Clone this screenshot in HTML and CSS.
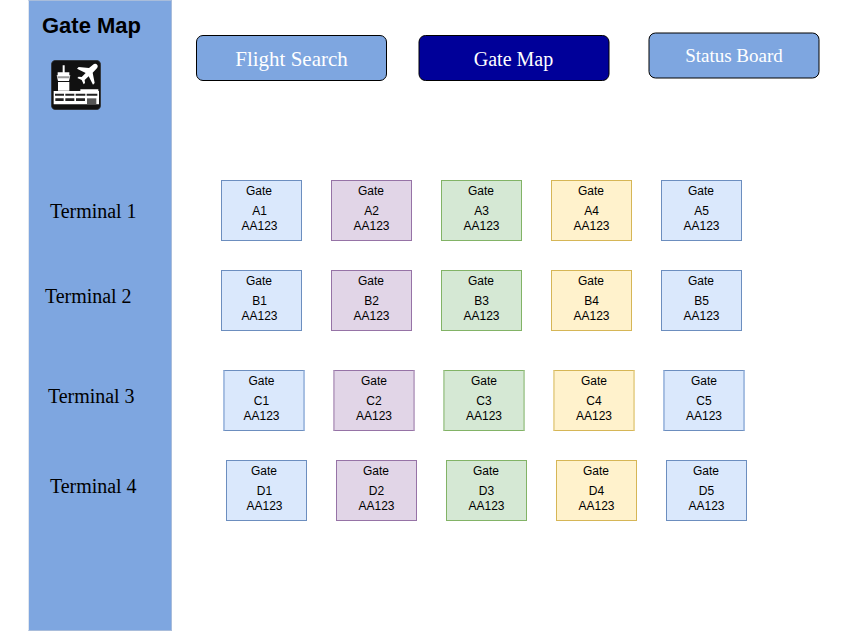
FILE: index.html
```html
<!DOCTYPE html>
<html lang="en">
<head>
<meta charset="utf-8">
<title>Gate Map</title>
<link rel="stylesheet" href="styles.css">
</head>
<body>
<aside class="sidebar">
  <h1 class="title">Gate Map</h1>
  <svg class="logo" viewBox="18 15 150 150" aria-hidden="true">
    <rect x="19" y="16" width="148" height="148" rx="13" fill="#111" stroke="#333" stroke-width="2"/>
    <path fill="#fff" d="M53 31h6v21h14v9H38v-9h15zM35 61h41l-4 17H39zM39 81h34v26H39z"/>
    <path fill="#999" d="M37 64h37l-1 6H38z"/>
    <path fill="#fff" d="M26 108h80v-5h54v5h2v40H26z"/>
    <path fill="#222" d="M30 116h27v6H30zM61 116h27v6H61zM92 116h29v6H92zM125 116h32v6h-32zM31 130h25v8H31zM61 130h27v8H61zM93 130h27v8H93z"/>
    <path fill="#555" d="M126 130h28v17h-28z"/>
    <path fill="#fff" d="M157 30c3 4 0 9-4 13l-10 10 6 31-5 5-13-25-12 11 1 9-4 4-6-13-13-6 4-4 9 1 12-12-26-13 5-5 31 3 11-9c5-4 10-5 14 0z"/>
  </svg>
  <div class="terminal t1">Terminal 1</div>
  <div class="terminal t2">Terminal 2</div>
  <div class="terminal t3">Terminal 3</div>
  <div class="terminal t4">Terminal 4</div>
</aside>
<main class="content">
  <nav class="nav">
    <a class="tab search">Flight Search</a>
    <a class="tab current">Gate Map</a>
    <a class="tab status">Status Board</a>
  </nav>
  <section class="row row-a">
    <div class="gate blue first"><p>Gate</p><p>A1<br>AA123</p></div>
    <div class="gate purple"><p>Gate</p><p>A2<br>AA123</p></div>
    <div class="gate green"><p>Gate</p><p>A3<br>AA123</p></div>
    <div class="gate yellow"><p>Gate</p><p>A4<br>AA123</p></div>
    <div class="gate blue"><p>Gate</p><p>A5<br>AA123</p></div>
  </section>
  <section class="row row-b">
    <div class="gate blue first"><p>Gate</p><p>B1<br>AA123</p></div>
    <div class="gate purple"><p>Gate</p><p>B2<br>AA123</p></div>
    <div class="gate green"><p>Gate</p><p>B3<br>AA123</p></div>
    <div class="gate yellow"><p>Gate</p><p>B4<br>AA123</p></div>
    <div class="gate blue"><p>Gate</p><p>B5<br>AA123</p></div>
  </section>
  <section class="row row-c">
    <div class="gate blue first"><p>Gate</p><p>C1<br>AA123</p></div>
    <div class="gate purple"><p>Gate</p><p>C2<br>AA123</p></div>
    <div class="gate green"><p>Gate</p><p>C3<br>AA123</p></div>
    <div class="gate yellow"><p>Gate</p><p>C4<br>AA123</p></div>
    <div class="gate blue"><p>Gate</p><p>C5<br>AA123</p></div>
  </section>
  <section class="row row-d">
    <div class="gate blue first"><p>Gate</p><p>D1<br>AA123</p></div>
    <div class="gate purple"><p>Gate</p><p>D2<br>AA123</p></div>
    <div class="gate green"><p>Gate</p><p>D3<br>AA123</p></div>
    <div class="gate yellow"><p>Gate</p><p>D4<br>AA123</p></div>
    <div class="gate blue"><p>Gate</p><p>D5<br>AA123</p></div>
  </section>
</main>
</body>
</html>
```
FILE: styles.css
```css
* { box-sizing: border-box; }

body {
  margin: 0;
  display: flex;
  height: 631px;
  background: #fff;
  overflow: hidden;
}

.sidebar {
  flex: none;
  width: 144px;
  height: 631px;
  margin-left: 28px;
  background: #7ea6e0;
  border: 1px solid #a9bddb;
  border-left-color: #e0e6ef;
}

.title {
  margin: 12px 0 0 13px;
  font: bold 22px/26px "Liberation Sans", Arial, sans-serif;
  white-space: nowrap;
}

.logo {
  display: block;
  width: 50px;
  height: 50px;
  margin: 21px 0 0 22px;
}

.terminal {
  font: 20px/24px "Liberation Serif", "Times New Roman", serif;
  letter-spacing: -0.05px;
  white-space: nowrap;
}

.t1 { margin: 89px 0 0 21px; }
.t2 { margin: 61px 0 0 16px; }
.t3 { margin: 76px 0 0 19px; }
.t4 { margin: 66px 0 0 21px; }

.content { flex: 1; }

.nav {
  display: flex;
  align-items: flex-start;
  height: 180px;
  padding: 35px 0 0 24px;
}

.tab {
  flex: none;
  width: 191px;
  height: 46px;
  border: 1px solid #000;
  border-radius: 7px;
  background: #7ea6e0;
  color: #fff;
  text-align: center;
  font: 21px/46px "Liberation Serif", "Times New Roman", serif;
}

.current {
  margin-left: 31px;
  padding-right: 1px;
  background: #000099;
  font-size: 20px;
  line-height: 47px;
  transform: translateX(0.5px);
}

.status {
  width: 171px;
  margin: -3px 0 0 39px;
  font-size: 19px;
  line-height: 44px;
  transform: translate(0.5px, 0.5px);
}

.row {
  display: flex;
  gap: 29px;
  padding-left: 49px;
}

.row-b { margin-top: 29px; }
.row-c { margin-top: 39px; padding-left: 51px; gap: 28px; }
.row-d { margin-top: 29px; padding-left: 54px; }

.gate {
  flex: none;
  width: 81px;
  height: 61px;
  border: 1px solid;
  padding-top: 3px;
  text-align: center;
  font: 12px/15px "Liberation Sans", Arial, sans-serif;
}

.row-c .gate {
  width: 82px;
  border-left-width: 2px;
  border-right-width: 2px;
}

.gate p { margin: 0 0 5px; color: #000; }
.gate p:first-child { margin-right: 1px; }
.row-c .gate p:first-child { margin-right: 0; }
.first { padding-right: 4px; }
.row-c .first { padding-right: 5px; }

.blue { background: #dae8fc; border-color: #6c8ebf; }
.purple { background: #e1d5e7; border-color: #9673a6; }
.green { background: #d5e8d4; border-color: #82b366; }
.yellow { background: #fff2cc; border-color: #d6b656; }

.row-c .blue { border-left-color: #a7bfe2; border-right-color: #a7bfe2; }
.row-c .purple { border-left-color: #c1acca; border-right-color: #c1acca; }
.row-c .green { border-left-color: #b2d1a5; border-right-color: #b2d1a5; }
.row-c .yellow { border-left-color: #ead79b; border-right-color: #ead79b; }
```
